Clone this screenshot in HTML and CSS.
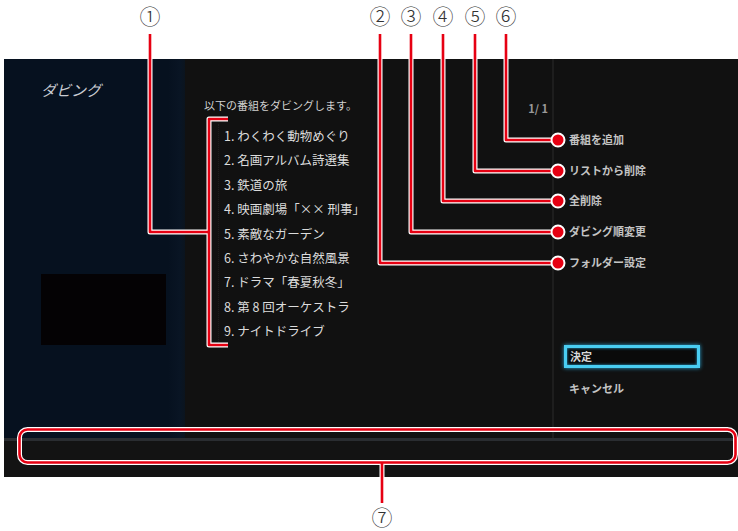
FILE: index.html
```html
<!DOCTYPE html>
<html lang="ja">
<head>
    <meta charset="UTF-8">
    <meta name="viewport" content="width=device-width, initial-scale=1.0">
    <title>ダビング</title>
    <link rel="stylesheet" href="styles.css">
</head>
<body>

    <div class="page">
        <div class="screen">
            <div class="columns">
                <!-- left: title and preview -->
                <div class="side">
                    <h1 class="title">ダビング</h1>
                    <div class="preview"></div>
                </div>

                <!-- middle: program list -->
                <div class="list-col">
                    <div class="list-head">
                        <span class="lead">以下の番組をダビングします。</span>
                        <span class="pager">1/ 1</span>
                    </div>
                    <ol class="programs">
                        <li>1. わくわく動物めぐり</li>
                        <li>2. 名画アルバム詩選集</li>
                        <li>3. 鉄道の旅</li>
                        <li>4. 映画劇場「×× 刑事」</li>
                        <li>5. 素敵なガーデン</li>
                        <li>6. さわやかな自然風景</li>
                        <li>7. ドラマ「春夏秋冬」</li>
                        <li>8. 第 8 回オーケストラ</li>
                        <li>9. ナイトドライブ</li>
                    </ol>
                </div>

                <!-- right: menu -->
                <div class="menu-col">
                    <ul class="menu">
                        <li>番組を追加</li>
                        <li>リストから削除</li>
                        <li>全削除</li>
                        <li>ダビング順変更</li>
                        <li>フォルダー設定</li>
                    </ul>
                    <div class="ok">決定</div>
                    <div class="cancel">キャンセル</div>
                </div>
            </div>
            <div class="statusbar"></div>
        </div>

        <!-- callout annotations -->
        <svg class="callouts" width="738" height="531" viewBox="0 0 738 531">
            <g class="lines-under">
                <path d="M150 34 V232 H209"/>
                <path d="M228 119 H209 V345 H228"/>
                <path d="M380 34 V263 H556"/>
                <path d="M411 34 V232 H556"/>
                <path d="M443 34 V201 H556"/>
                <path d="M475 34 V171 H556"/>
                <path d="M506 34 V140 H556"/>
                <rect x="19.5" y="429.5" width="716" height="33" rx="8"/>
                <path d="M382 463 V503"/>
            </g>
            <g class="lines">
                <path d="M150 34 V232 H209"/>
                <path d="M228 119 H209 V345 H228"/>
                <path d="M380 34 V263 H556"/>
                <path d="M411 34 V232 H556"/>
                <path d="M443 34 V201 H556"/>
                <path d="M475 34 V171 H556"/>
                <path d="M506 34 V140 H556"/>
                <rect x="19.5" y="429.5" width="716" height="33" rx="8"/>
                <path d="M382 463 V503"/>
            </g>
            <g class="dots">
                <circle cx="558" cy="140" r="6.5"/>
                <circle cx="558" cy="171" r="6.5"/>
                <circle cx="558" cy="201" r="6.5"/>
                <circle cx="558" cy="232" r="6.5"/>
                <circle cx="558" cy="263" r="6.5"/>
            </g>
            <g class="nums">
                <text x="150" y="24">①</text>
                <text x="380" y="24">②</text>
                <text x="411" y="24">③</text>
                <text x="443" y="24">④</text>
                <text x="475" y="24">⑤</text>
                <text x="506" y="24">⑥</text>
                <text x="382" y="525">⑦</text>
            </g>
        </svg>
    </div>

</body>
</html>
```

FILE: styles.css
```css
body {
    margin: 0;
    padding: 0;
    background: #fff;
    font-family: "Noto Sans CJK JP", "Noto Sans", sans-serif;
}
.page {
    position: relative;
    width: 738px;
    height: 531px;
    overflow: hidden;
}
.screen {
    margin: 59px 0 0 4px;
    width: 734px;
    height: 418px;
    display: flex;
    flex-direction: column;
    background: #111;
}
.columns {
    flex: 1;
    display: flex;
}
.side {
    width: 181px;
    background: linear-gradient(to right, #06111f 0, #06111f 164px, #091524 176px, #0b141e 181px);
    padding: 21px 0 0 37px;
    box-sizing: border-box;
}
.title {
    margin: 0;
    font-size: 15px;
    line-height: 20px;
    font-weight: normal;
    font-style: italic;
    color: #c9ccd2;
}
.preview {
    width: 125px;
    height: 71px;
    margin-top: 174px;
    background: #040204;
}
.list-col {
    width: 367px;
    padding: 39px 0 0 19px;
    box-sizing: border-box;
}
.list-head {
    display: flex;
    justify-content: space-between;
    align-items: flex-start;
    padding-right: 4px;
}
.lead {
    font-size: 11px;
    line-height: 14px;
    color: #d0d0d0;
}
.pager {
    margin-top: 3px;
    font-size: 11px;
    line-height: 14px;
    font-weight: bold;
    color: #9a9a9a;
}
.programs {
    list-style: none;
    margin: 9px 0 0 14px;
    padding: 0 0 0 5px;
    border-left: 1px dotted #1d1d1d;
}
.programs li {
    font-size: 12.5px;
    line-height: 24.4px;
    color: #dcdcdc;
    white-space: nowrap;
}
.menu-col {
    flex: 1;
    border-left: 2px solid #1e1e1e;
    padding: 65px 0 0 15px;
}
.menu {
    list-style: none;
    margin: 0;
    padding: 0;
}
.menu li {
    font-size: 11px;
    line-height: 30.7px;
    font-weight: bold;
    color: #c4c4c4;
}
.ok {
    margin: 67px 0 0 -5px;
    width: 127px;
    height: 17px;
    border: 3px solid #49cdf2;
    box-shadow: 0 0 4px #2aa8d8, inset 0 0 3px #2aa8d8;
    background: #0a0a0a;
    font-size: 11px;
    font-weight: bold;
    line-height: 17px;
    color: #d8d8d8;
    padding-left: 3px;
}
.cancel {
    margin-top: 10px;
    font-size: 11px;
    line-height: 20px;
    font-weight: bold;
    color: #c4c4c4;
}
.statusbar {
    height: 36px;
    border-top: 3px solid #2a2d31;
    background: #131313;
}
.callouts {
    position: absolute;
    left: 0;
    top: 0;
}
.lines-under path, .lines-under rect {
    fill: none;
    stroke: #fff;
    stroke-width: 5;
    stroke-linejoin: round;
}
.lines path, .lines rect {
    fill: none;
    stroke: #e60012;
    stroke-width: 2.6;
    stroke-linejoin: round;
}
.dots circle {
    fill: #e60012;
    stroke: #fff;
    stroke-width: 2;
}
.nums text {
    font-family: "Noto Sans CJK JP", sans-serif;
    font-size: 21px;
    font-weight: 300;
    fill: #333;
    text-anchor: middle;
}
```
